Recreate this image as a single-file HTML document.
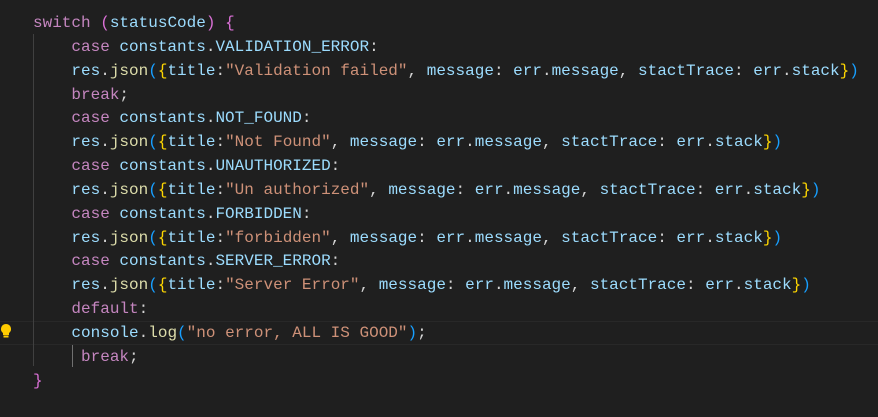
<!DOCTYPE html>
<html><head><meta charset="utf-8"><style>
html,body{margin:0;padding:0;background:#1f1f1f;width:878px;height:417px;overflow:hidden}
.code{position:absolute;left:33px;top:12px;font-family:"Liberation Mono",monospace;font-size:16px;line-height:23.85px;color:#d4d4d4;white-space:pre}
.k{color:#c586c0}.v{color:#9cdcfe}.c{color:#9cdcfe}.f{color:#dcdcaa}.s{color:#ce9178}
.p{color:#da70d6}.g{color:#ffd700}.b{color:#179fff}
.guide{position:absolute;left:33px;top:34px;width:1px;height:332px;background:#404040}
.guide2{position:absolute;left:72px;top:345px;width:1px;height:22px;background:#707070}
.cur{position:absolute;left:0;top:321px;width:878px;height:22px;border-top:1px solid #282828;border-bottom:1px solid #282828}
</style></head><body>
<div class="cur"></div>
<div class="guide"></div>
<div class="guide2"></div>
<svg style="position:absolute;left:0;top:323px" width="12" height="16" viewBox="0 0 12 16"><path d="M6 1a5 5 0 0 0-3 9v2h6v-2a5 5 0 0 0-3-9z" fill="#ffcc00"/><rect x="3.5" y="12.5" width="5" height="2" fill="#ffcc00"/></svg>
<div class="code"><span class="k">switch</span> <span class="p">(</span><span class="v">statusCode</span><span class="p">)</span> <span class="p">{</span>
    <span class="k">case</span> <span class="v">constants</span>.<span class="c">VALIDATION_ERROR</span>:
    <span class="v">res</span>.<span class="f">json</span><span class="b">(</span><span class="g">{</span><span class="v">title</span>:<span class="s">"Validation failed"</span>, <span class="v">message</span>: <span class="v">err</span>.<span class="v">message</span>, <span class="v">stactTrace</span>: <span class="v">err</span>.<span class="v">stack</span><span class="g">}</span><span class="b">)</span>
    <span class="k">break</span>;
    <span class="k">case</span> <span class="v">constants</span>.<span class="c">NOT_FOUND</span>:
    <span class="v">res</span>.<span class="f">json</span><span class="b">(</span><span class="g">{</span><span class="v">title</span>:<span class="s">"Not Found"</span>, <span class="v">message</span>: <span class="v">err</span>.<span class="v">message</span>, <span class="v">stactTrace</span>: <span class="v">err</span>.<span class="v">stack</span><span class="g">}</span><span class="b">)</span>
    <span class="k">case</span> <span class="v">constants</span>.<span class="c">UNAUTHORIZED</span>:
    <span class="v">res</span>.<span class="f">json</span><span class="b">(</span><span class="g">{</span><span class="v">title</span>:<span class="s">"Un authorized"</span>, <span class="v">message</span>: <span class="v">err</span>.<span class="v">message</span>, <span class="v">stactTrace</span>: <span class="v">err</span>.<span class="v">stack</span><span class="g">}</span><span class="b">)</span>
    <span class="k">case</span> <span class="v">constants</span>.<span class="c">FORBIDDEN</span>:
    <span class="v">res</span>.<span class="f">json</span><span class="b">(</span><span class="g">{</span><span class="v">title</span>:<span class="s">"forbidden"</span>, <span class="v">message</span>: <span class="v">err</span>.<span class="v">message</span>, <span class="v">stactTrace</span>: <span class="v">err</span>.<span class="v">stack</span><span class="g">}</span><span class="b">)</span>
    <span class="k">case</span> <span class="v">constants</span>.<span class="c">SERVER_ERROR</span>:
    <span class="v">res</span>.<span class="f">json</span><span class="b">(</span><span class="g">{</span><span class="v">title</span>:<span class="s">"Server Error"</span>, <span class="v">message</span>: <span class="v">err</span>.<span class="v">message</span>, <span class="v">stactTrace</span>: <span class="v">err</span>.<span class="v">stack</span><span class="g">}</span><span class="b">)</span>
    <span class="k">default</span>:
    <span class="v">console</span>.<span class="f">log</span><span class="b">(</span><span class="s">"no error, ALL IS GOOD"</span><span class="b">)</span>;
     <span class="k">break</span>;
<span class="p">}</span></div>
</body></html>
